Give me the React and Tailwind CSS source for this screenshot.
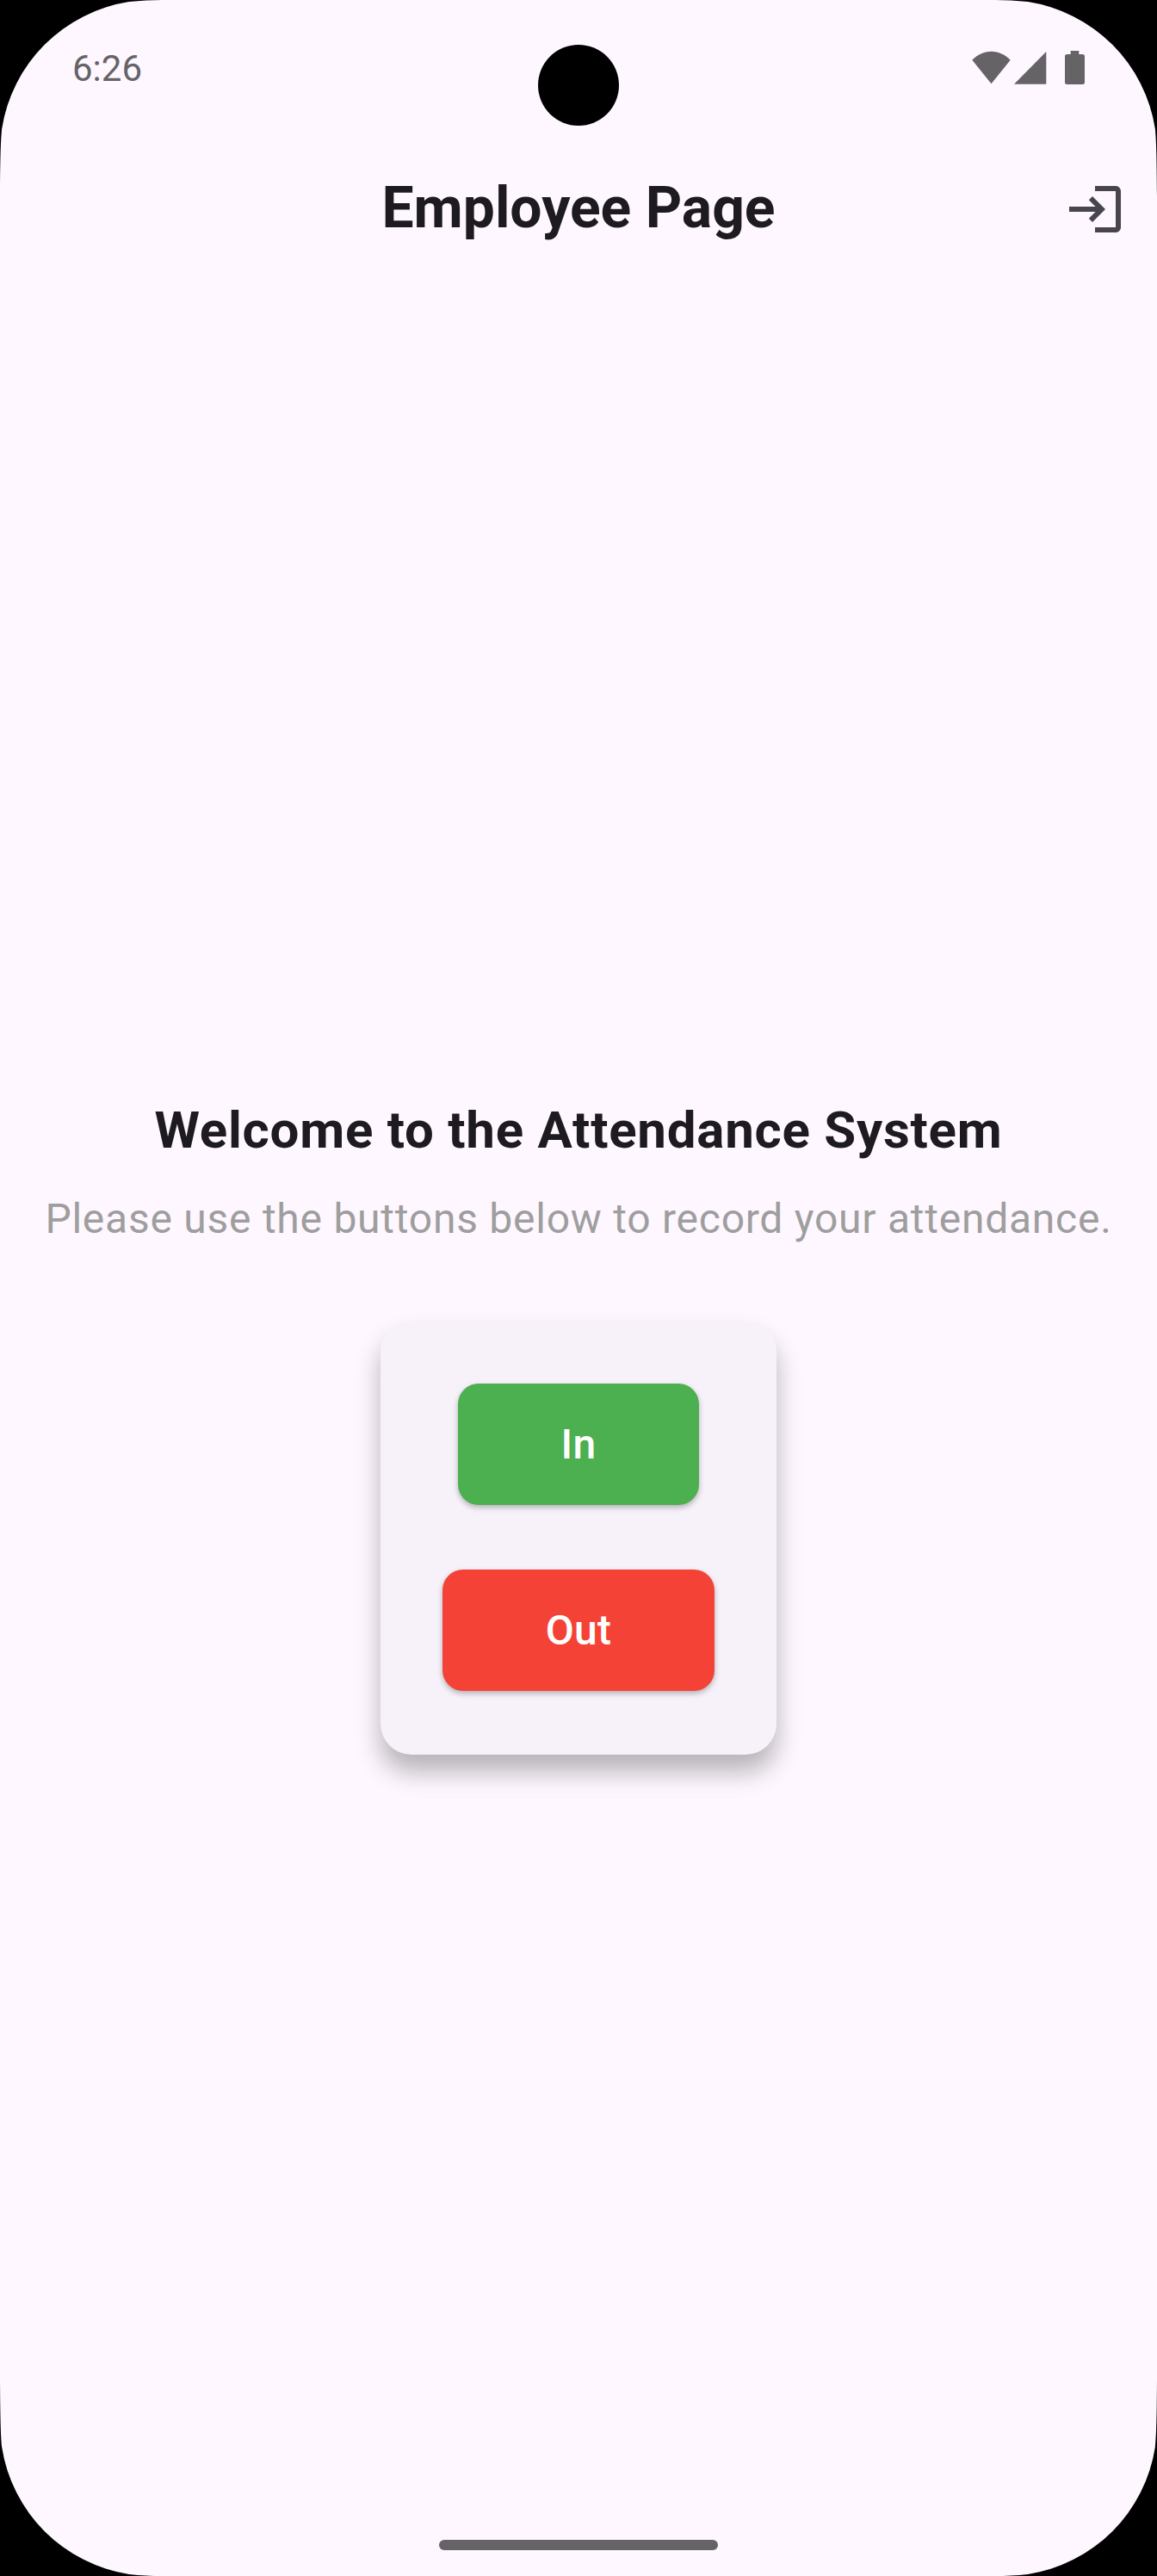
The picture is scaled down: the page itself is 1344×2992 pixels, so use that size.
function Corner({ className }) {
  return (
    <svg className={className} width="230" height="230" viewBox="0 0 230 230" aria-hidden="true">
      <path d="M0 0H188C176 .2 163 .7 150 2.1A177 177 0 0 0 2.1 150C.9 164 .3 180 0 228Z" fill="#000" />
    </svg>
  );
}

function StatusBar() {
  return (
    <header className="relative flex h-[156px] shrink-0 items-start justify-between pt-[58px] pr-[84px] pl-[84px] text-[#666367]">
      <span className="mt-px text-[42px] leading-[42px]">6:26</span>
      <svg width="133" height="42" viewBox="0 0 133 42" fill="currentColor" aria-hidden="true">
        <path d="M24.5 39.2L2.3 11.7C8.5 5.5 16 1.8 24.5 1.8S40.5 5.5 46.7 11.7Z" />
        <path d="M51 39.7L88.3 2V39.7Z" />
        <path d="M116.7 1h9.6v4h4.2a2.5 2.5 0 0 1 2.5 2.5v30a2.5 2.5 0 0 1-2.5 2.5h-18a2.5 2.5 0 0 1-2.5-2.5v-30a2.5 2.5 0 0 1 2.5-2.5h4.2z" />
      </svg>
      <div className="absolute top-[52px] left-[625px] size-[94px] rounded-full bg-black" />
    </header>
  );
}

function AppBar() {
  return (
    <div className="grid h-[174px] shrink-0 grid-cols-[1fr_auto_1fr] items-center">
      <h1 className="col-start-2 pb-[2px] text-[66px] leading-[84px] font-bold whitespace-nowrap">Employee Page</h1>
      <button className="mr-[36px] justify-self-end text-[#49454f]" aria-label="Log out">
        <svg width="72" height="72" viewBox="0 0 24 24" fill="currentColor">
          <path d="M11 7L9.6 8.4l2.6 2.6H2v2h10.2l-2.6 2.6L11 17l5-5-5-5zm9 12h-8v2h8c1.1 0 2-.9 2-2V5c0-1.1-.9-2-2-2h-8v2h8v14z" />
        </svg>
      </button>
    </div>
  );
}

export default function App() {
  return (
    <div className="h-[2992px] w-[1344px] bg-black font-['Roboto',sans-serif] text-[#1d1b20]">
      <div className="relative flex h-full flex-col overflow-hidden bg-[#fef7ff]">
        <StatusBar />
        <AppBar />
        <main className="flex flex-1 flex-col items-center pt-[940px]">
          <h2 className="text-[60px] leading-[86px] font-bold tracking-[0.75px] whitespace-nowrap">
            Welcome to the Attendance System
          </h2>
          <p className="mt-[26px] text-[48px] leading-[68px] tracking-[0.75px] whitespace-nowrap text-[#9e9e9e]">
            Please use the buttons below to record your attendance.
          </p>
          <section className="mt-[84px] flex h-[504px] w-[460px] flex-col items-center gap-[75px] rounded-[36px] bg-[#f7f2fa] pt-[73px] shadow-[0_20px_29px_rgba(0,0,0,0.28)]">
            <button className="h-[141px] w-[280px] rounded-[24px] bg-[#4caf50] text-[48px] font-medium tracking-[0.3px] text-white shadow-[0_3px_6px_rgba(0,0,0,0.28)]">
              In
            </button>
            <button className="h-[141px] w-[316px] rounded-[24px] bg-[#f44336] text-[48px] font-medium tracking-[0.3px] text-white shadow-[0_3px_6px_rgba(0,0,0,0.28)]">
              Out
            </button>
          </section>
        </main>
        <footer className="flex h-[42px] shrink-0 justify-center">
          <div className="h-3 w-[324px] rounded-full bg-[#666367]" />
        </footer>
        <Corner className="absolute top-0 left-0" />
        <Corner className="absolute top-0 right-0 -scale-x-100" />
        <Corner className="absolute bottom-0 left-0 -scale-y-100" />
        <Corner className="absolute right-0 bottom-0 -scale-100" />
      </div>
    </div>
  );
}
